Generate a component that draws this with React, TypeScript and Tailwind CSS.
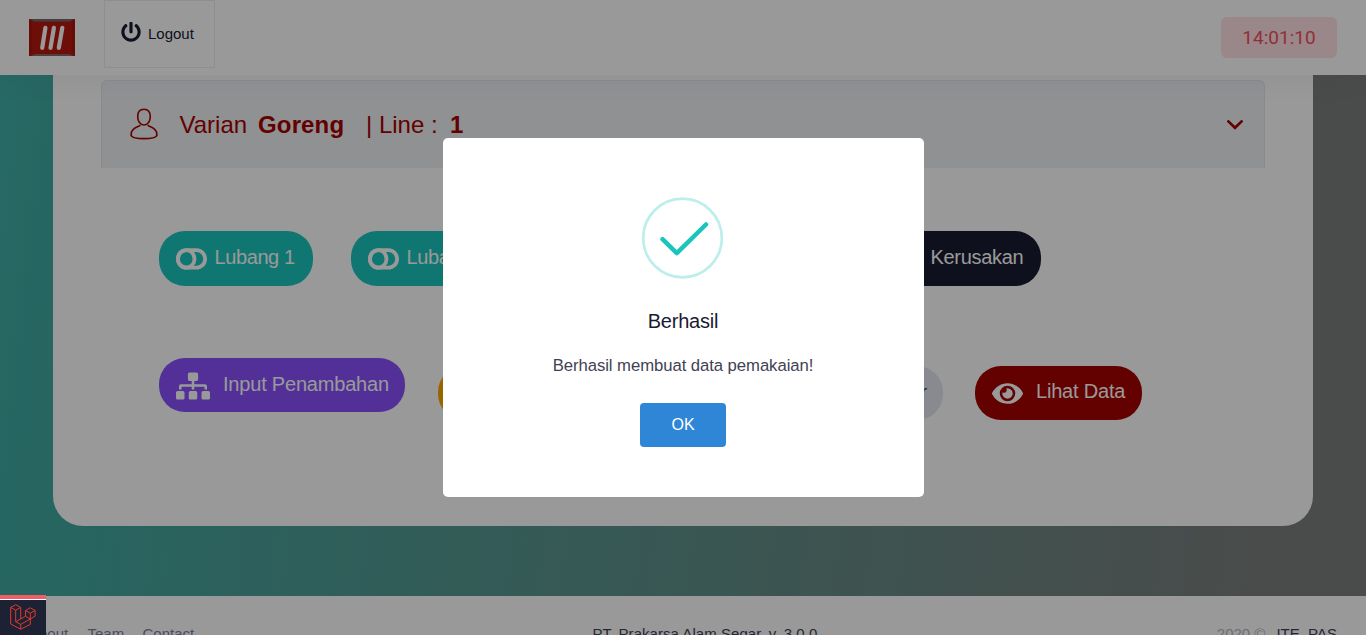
import type { ReactNode } from 'react'
import { FaSitemap, FaEye, FaPowerOff, FaWrench, FaEdit, FaChartBar } from 'react-icons/fa'

type PillProps = { className: string; icon: ReactNode; label: string; labelClass?: string }

function Pill({ className, icon, label, labelClass = '' }: PillProps) {
  return (
    <button className={`flex shrink-0 items-center rounded-[26px] pl-[17px] text-xl leading-[30px] whitespace-nowrap ${className}`}>
      {icon}
      <span className={`pb-[3px] tracking-[-0.2px] ${labelClass}`}>{label}</span>
    </button>
  )
}

function ToggleIcon() {
  return (
    <svg className="mr-[7.5px] h-[22px] w-[31px] shrink-0" viewBox="0 0 31 22" fill="none" stroke="currentColor" strokeWidth="3.8">
      <rect x="1.9" y="2.1" width="27.2" height="17.6" rx="8.8" />
      <ellipse cx="10.2" cy="10.9" rx="8.3" ry="8.8" />
    </svg>
  )
}

function Logo() {
  return (
    <svg className="h-[37px] w-[46px]" viewBox="0 0 46 37">
      <rect width="46" height="37" fill="#b81810" />
      <path d="M1 0H45L41 2.6H5Z" fill="#706c6b" />
      <path d="M2 37H44L40 35H6Z" fill="#806b68" />
      <path d="M0 0L3 3V33L0 37ZM46 0L43 3V33L46 37Z" fill="#a9140c" />
      <g stroke="#fff" strokeWidth="4.2" strokeLinecap="round">
        <path d="M16.4 8.8L13.2 28.8M24.9 8.8L21.5 28.8M33.3 8.8L29.8 28.8" />
      </g>
    </svg>
  )
}

function UserIcon() {
  return (
    <svg className="relative -top-px h-[32px] w-[28px]" viewBox="0 0 28 32" fill="none" stroke="currentColor" strokeWidth="1.6">
      <path d="M14 1.3C9.8 1.3 7.7 4.3 7.7 8.4C7.7 13 10.2 17 14 17C17.8 17 20.3 13 20.3 8.4C20.3 4.3 18.2 1.3 14 1.3Z" />
      <path d="M10.3 17.2C8.5 19.2 1.2 19.6 1.2 26V27.6C3.5 31.6 24.5 31.6 26.8 27.6V26C26.8 19.6 19.5 19.2 17.7 17.2" />
    </svg>
  )
}

function LaravelIcon() {
  return (
    <svg className="h-[26px] w-[26px]" viewBox="0 0 26 26" fill="none" stroke="#e0392e" strokeWidth="1" strokeLinejoin="round">
      <path d="M.7 3.4L5.7 .7L10.7 3.4V15L15.5 12.2V6.5L20.3 3.8L25.1 6.5V12.2L20.3 15V20.4L10.7 25.2L.7 20V3.4ZM.7 3.4L5.7 6.2L10.7 3.4M5.7 6.2V17.7L10.7 20.4L20.3 15M10.7 20.4V25.2M5.7 17.7L10.7 15M15.5 6.5L20.3 9.2L25.1 6.5M20.3 9.2V15M15.5 12.2L20.3 15" />
    </svg>
  )
}

export default function App() {
  return (
    <div className="relative flex h-[635px] w-full flex-col overflow-hidden bg-white font-['Liberation_Sans',Arial,sans-serif] text-[#3f4254]">
      <header className="z-10 flex h-[75px] shrink-0 items-start bg-white pl-[29px] pr-[29px] shadow-[0_0_30px_rgba(82,63,105,0.09)]">
        <div className="mt-[19px]"><Logo /></div>
        <button className="ml-[29px] flex h-[68px] w-[111px] items-center border border-[#ebedf3] pl-4 text-[15px] text-[#181c32]">
          <FaPowerOff className="relative -top-[2px] mr-[7px] h-[20px] w-[20px]" />
          Logout
        </button>
        <div className="mt-[17px] ml-auto flex h-[41px] w-[116px] items-center justify-center rounded-md bg-[#ffe2e5] pt-px font-[Roboto,sans-serif] text-[19px] text-[#f64e60]">
          14:01:10
        </div>
      </header>

      <main className="h-[521px] shrink-0 bg-[linear-gradient(97deg,#43bfb5_-12%,#40aaa2_5%,#628f89_55%,#7c7e7d_94%)] pr-[53px] pl-[53px]">
        <section className="h-[451px] w-full rounded-b-[30px] bg-white px-12 pt-[5px]">
          <div className="flex h-[88px] items-center rounded-t-md border border-b-0 border-[#e3e8ed] bg-[#eff2f5] pr-[21px] pl-[28px] text-[#a60000]">
            <UserIcon />
            <div className="ml-[21.5px] flex text-2xl leading-[30px] whitespace-pre">
              <span className="w-[78.5px]">Varian</span>
              <span className="w-[108px] font-bold tracking-[0.15px]">Goreng</span>
              <span className="w-[84px]">| Line :</span>
              <span className="font-bold">1</span>
            </div>
            <svg className="ml-auto h-[10px] w-[16px]" viewBox="0 0 16 10" fill="none" stroke="currentColor" strokeWidth="2.7" strokeLinecap="round">
              <path d="M1.4 1.4L8 7.8L14.6 1.4" />
            </svg>
          </div>
          <div className="mt-[63px] flex h-[55px] pl-[58px] text-white">
            <Pill className="w-[154px] bg-[#1bc5bd]" icon={<ToggleIcon />} label="Lubang 1" labelClass="tracking-[-0.4px]" />
            <Pill className="ml-[38px] w-[154px] bg-[#1bc5bd]" icon={<ToggleIcon />} label="Lubang 2" labelClass="tracking-[-0.4px]" />
            <Pill className="ml-[38px] w-[154px] bg-[#1bc5bd]" icon={<ToggleIcon />} label="Lubang 3" labelClass="tracking-[-0.4px]" />
            <Pill className="ml-[169px] w-[175px] bg-[#181c32]" icon={<FaWrench className="mr-[16.5px] h-[31px] w-[31px]" />} label="Kerusakan" labelClass="tracking-[-0.3px]" />
          </div>
          <div className="mt-[72px] flex h-[62px] items-end pl-[58px] text-white">
            <Pill className="h-[54px] w-[246px] self-start bg-[#8950fc]" icon={<FaSitemap className="mt-[2px] mr-[13px] h-[34px] w-[34px]" />} label="Input Penambahan" />
            <Pill className="ml-[33px] h-[54px] w-[230px] bg-[#ffa800]" icon={<FaEdit className="mr-3 h-[31px] w-[31px]" />} label="Input Pemakaian" />
            <Pill className="ml-[32px] h-[54px] w-[243px] bg-[#e4e6ef] pr-4 text-[#3f4254]" icon={<FaChartBar className="h-[31px] w-[31px]" />} label="Input Monitor" labelClass="ml-auto" />
            <Pill className="ml-[32px] h-[54px] w-[167px] bg-[#a60000]" icon={<FaEye className="mr-[13px] h-[31px] w-[31px]" />} label="Lihat Data" labelClass="pb-[4px]" />
          </div>
        </section>
      </main>

      <footer className="flex h-[39px] shrink-0 items-start bg-white pt-[28px] pr-[29px] pl-[29px] text-[15px] leading-[20px] whitespace-pre">
        <nav className="flex w-[563.5px] text-[#7e8299]">
          <span className="w-[58.5px]">About</span>
          <span className="w-[55px]">Team</span>
          <span>Contact</span>
        </nav>
        <span className="tracking-[0.05px]">PT. Prakarsa Alam Segar. v. 3.0.0</span>
        <span className="ml-auto text-[#b5b5c3]">2020 ©</span>
        <span className="ml-[11px]">ITE_PAS</span>
      </footer>

      <div className="absolute inset-0 z-20 flex items-center justify-center bg-black/40">
        <div role="dialog" className="flex h-[359px] w-[481px] flex-col items-center rounded-[5px] bg-white">
          <svg className="mt-[59px] h-[82px] w-[82px]" viewBox="0 0 82 82" fill="none">
            <circle cx="40.5" cy="41" r="39.3" stroke="#bceeeb" strokeWidth="2.7" />
            <path d="M20.5 42.2L34.8 56.2L64 27.5" stroke="#1bc5bd" strokeWidth="4.5" strokeLinecap="round" strokeLinejoin="round" />
          </svg>
          <h2 className="mt-[27px] text-xl leading-[30px] tracking-[-0.2px] text-[#181c32]">Berhasil</h2>
          <p className="mt-[17px] text-[16.7px] leading-[26px] tracking-[-0.06px] text-[#3f4254]">Berhasil membuat data pemakaian!</p>
          <button className="mt-[24px] h-[44px] w-[86px] rounded bg-[#2f86d6] pb-px text-[16px] text-white">OK</button>
        </div>
      </div>

      <div className="absolute bottom-0 left-0 z-30 flex h-[40px] w-[46px] flex-col items-center border-t-4 border-[#f05d65] bg-[#1c2133]">
        <div className="h-px w-full shrink-0 bg-white" />
        <div className="mt-[4px] mr-[1px]"><LaravelIcon /></div>
      </div>
    </div>
  )
}
